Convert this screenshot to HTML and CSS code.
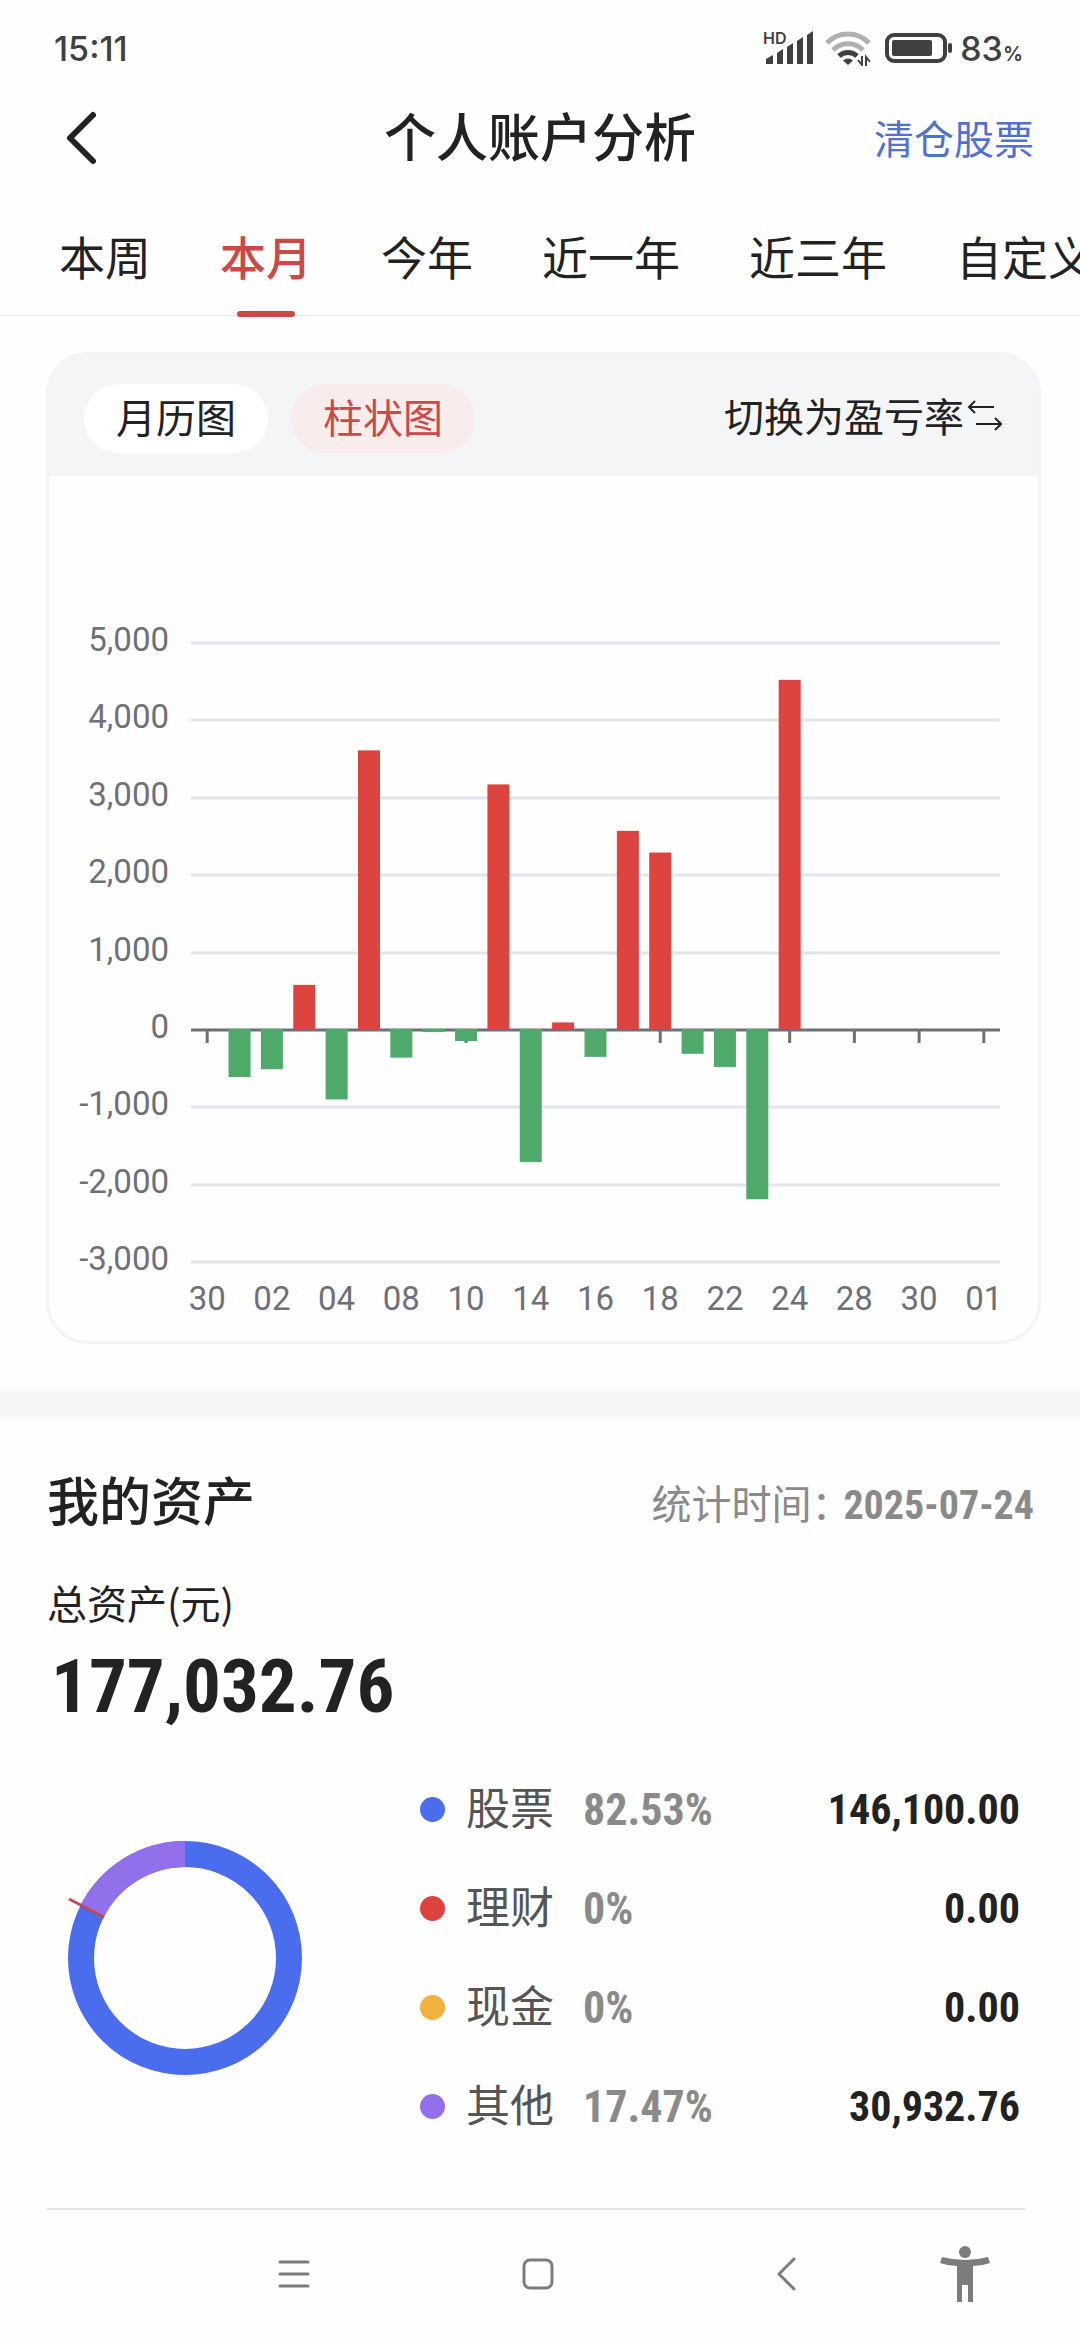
FILE: index.html
```html
<!DOCTYPE html>
<html lang="zh-CN">
<head>
    <meta charset="UTF-8">
    <meta name="viewport" content="width=device-width, initial-scale=1.0">
    <title>个人账户分析</title>
    <link rel="stylesheet" href="styles.css">
</head>

<body>

    <div class="status-bar">
        <span class="clock">15:11</span>
        <div class="status-icons">
            <svg class="icon-signal" width="54" height="36" viewBox="0 0 54 36" fill="#404040">
                <text x="2" y="14" font-size="16" font-weight="600">HD</text>
                <path d="M5 34v-5l7-4v9zM16 34V23l6-4v15zM26 34V17l6-4v21zM36 34V11l6-4v27zM46 34V5l6-4v33z"/>
            </svg>
            <svg class="icon-wifi" width="48" height="36" viewBox="0 0 48 36" fill="none" stroke-width="5">
                <path d="M3 13a29 29 0 0 1 42 0" stroke="#b0b0b0"/>
                <path d="M9 20a21 21 0 0 1 30 0" stroke="#b0b0b0"/>
                <path d="M15 26a13 13 0 0 1 18 0" stroke="#404040"/>
                <path d="M24 35l-5-4.500q5-4 10 0z" fill="#404040"/>
                <path d="M38 26v9l-4-5M42 36v-9l4 5" stroke="#404040" stroke-width="2"/>
            </svg>
            <svg class="icon-battery" width="70" height="32" viewBox="0 0 70 32" fill="none">
                <rect x="3" y="3" width="58" height="26" rx="7" stroke="#404040" stroke-width="4"/>
                <rect x="8" y="8" width="40" height="16" rx="2" fill="#404040"/>
                <rect x="64" y="11" width="4" height="10" rx="2" fill="#404040"/>
            </svg>
            <span class="battery-level">83<small>%</small></span>
        </div>
    </div>

    <header class="header">
        <button class="back-button" aria-label="返回">
            <svg width="36" height="56" viewBox="0 0 36 56" fill="none" stroke="#222" stroke-width="6" stroke-linecap="round" stroke-linejoin="round">
                <path d="M31 5L8 28l23 23"/>
            </svg>
        </button>
        <h1>个人账户分析</h1>
        <a class="clear-link" href="#">清仓股票</a>
    </header>

    <nav class="tabs">
        <button>本周</button>
        <button class="active">本月</button>
        <button>今年</button>
        <button>近一年</button>
        <button>近三年</button>
        <button>自定义</button>
    </nav>

    <main>
        <section class="chart-card">
            <div class="chart-header">
                <button class="pill">月历图</button>
                <button class="pill pill-active">柱状图</button>
                <button class="switch-button">切换为盈亏率<svg width="38" height="32" viewBox="0 0 38 32" fill="none" stroke="#222" stroke-width="2">
                        <path d="M30 8H5M11 2L5 8l6 6M12 25h25M31 19l6 6-6 6"/>
                    </svg></button>
            </div>
            <svg class="chart" id="chart" viewBox="0 0 989 865"></svg>
        </section>

        <section class="assets">
            <div class="assets-header">
                <h2>我的资产</h2>
                <p class="stat-time">统计时间：<span class="number">2025-07-24</span></p>
            </div>
            <p class="total-label">总资产(元)</p>
            <p class="total number">177,032.76</p>
            <div class="assets-body">
                <svg class="donut" width="236" height="236" viewBox="0 0 236 236" fill="none">
                    <circle cx="118" cy="118" r="104" stroke="#4a6dee" stroke-width="26"/>
                    <circle cx="118" cy="118" r="104" stroke="#9370eb" stroke-width="26" pathLength="10000" stroke-dasharray="1747 8253" transform="rotate(-152.900 118 118)"/>
                    <path d="M2 59l35 18" stroke="#c04a50" stroke-width="3"/>
                </svg>
                <table class="legend">
                    <tr>
                        <td><span class="dot dot-stock"></span></td>
                        <td class="name">股票</td>
                        <td class="percent number">82.53%</td>
                        <td class="value number">146,100.00</td>
                    </tr>
                    <tr>
                        <td><span class="dot dot-finance"></span></td>
                        <td class="name">理财</td>
                        <td class="percent number">0%</td>
                        <td class="value number">0.00</td>
                    </tr>
                    <tr>
                        <td><span class="dot dot-cash"></span></td>
                        <td class="name">现金</td>
                        <td class="percent number">0%</td>
                        <td class="value number">0.00</td>
                    </tr>
                    <tr>
                        <td><span class="dot dot-other"></span></td>
                        <td class="name">其他</td>
                        <td class="percent number">17.47%</td>
                        <td class="value number">30,932.76</td>
                    </tr>
                </table>
            </div>
        </section>
    </main>

    <footer class="nav-bar">
        <button aria-label="菜单">
            <svg width="32" height="32" viewBox="0 0 32 32" stroke="#7c7c7c" stroke-width="3" stroke-linecap="round">
                <path d="M2 4h28M2 16h28M2 28h28"/>
            </svg>
        </button>
        <button aria-label="主页">
            <svg width="32" height="32" viewBox="0 0 32 32" fill="none" stroke="#7c7c7c" stroke-width="3">
                <rect x="2" y="2" width="28" height="28" rx="6"/>
            </svg>
        </button>
        <button aria-label="返回">
            <svg width="20" height="34" viewBox="0 0 20 34" fill="none" stroke="#7c7c7c" stroke-width="3" stroke-linecap="round" stroke-linejoin="round">
                <path d="M18 2L3 17l15 15"/>
            </svg>
        </button>
        <button aria-label="无障碍">
            <svg width="50" height="58" viewBox="0 0 50 58" fill="#7c7c7c">
                <ellipse cx="25" cy="7" rx="6" ry="6"/>
                <path d="M2 12Q25 18 48 12l2 6q-8 3-17 3v36h-5V40h-6v17h-5V21Q8 21 0 18z"/>
            </svg>
        </button>
    </footer>

    <script>
        class BarChart {
            constructor(svg, days, values) {
                this.svg = svg;
                this.days = days;
                this.values = values;
                this.left = 142;
                this.right = 951;
                this.top = 167;
                this.step = 77.4;
                this.zero = this.top + this.step * 5;
                this.slot = (this.right - this.left) / days.length;
            }

            y(value) {
                return this.zero - value / 1000 * this.step;
            }

            renderGrid() {
                let html = "";
                for (let v = 5000; v >= -3000; v -= 1000) {
                    const y = Math.round(this.y(v));
                    if (v !== 0) {
                        html += `<line class="grid" x1="${this.left}" x2="${this.right}" y1="${y}" y2="${y}"/>`;
                    }
                    html += `<text class="label" text-anchor="end" x="120" y="${y + 8}">${v.toLocaleString("en-US")}</text>`;
                }
                return html;
            }

            renderAxis() {
                const y = Math.round(this.zero);
                let html = `<line class="axis" x1="${this.left}" x2="${this.right}" y1="${y}" y2="${y}"/>`;
                for (let i = 0; i < this.days.length; i += 2) {
                    const x = this.left + this.slot * (i + 0.5);
                    html += `<line class="axis" x1="${x}" x2="${x}" y1="${y}" y2="${y + 13}"/>`;
                    html += `<text class="label" text-anchor="middle" x="${x}" y="834">${this.days[i]}</text>`;
                }
                return html;
            }

            renderBars() {
                let html = "";
                const width = 22;
                for (let i = 0; i < this.values.length; i++) {
                    const v = this.values[i];
                    const x = this.left + this.slot * (i + 0.5) - width / 2;
                    const y = Math.min(this.y(v), this.zero) - 1;
                    const height = Math.abs(this.y(v) - this.zero);
                    html += `<rect class="${v > 0 ? "up" : "down"}" x="${x}" y="${y}" width="${width}" height="${height}"/>`;
                }
                return html;
            }

            render() {
                this.svg.innerHTML = this.renderGrid() + this.renderAxis() + this.renderBars();
            }
        }

        const days = [
            "30", "01", "02", "03", "04", "07", "08", "09", "10", "11", "14", "15", "16",
            "17", "18", "21", "22", "23", "24", "25", "28", "29", "30", "31", "01"
        ];
        const values = [
            0, -620, -520, 570, -910, 3600, -370, -40, -155, 3160, -1720, 85, -360,
            2560, 2280, -320, -490, -2200, 4510
        ];

        new BarChart(document.getElementById("chart"), days, values).render();
    </script>

</body>
</html>
```
FILE: styles.css
```css
body {
    font-family: "Noto Sans CJK SC", sans-serif;
    background-color: #fefefe;
    color: #222;
    margin: 0;
    overflow-x: hidden;
}

h1,
h2,
p {
    margin: 0;
}

button {
    font: inherit;
    color: inherit;
    background: none;
    border: none;
    margin: 0;
    padding: 0;
    cursor: pointer;
}

svg {
    display: block;
}

.number {
    font-family: "Roboto Condensed", "Liberation Sans Narrow", Roboto, sans-serif;
    font-weight: 700;
}

/* status bar */
.status-bar {
    display: flex;
    justify-content: space-between;
    align-items: center;
    height: 96px;
    padding: 0 57px 0 54px;
    font-family: Inter, sans-serif;
    font-size: 34px;
    font-weight: 500;
    color: #404040;
}

.status-icons {
    display: flex;
    align-items: center;
    gap: 6px;
}

.icon-signal {
    margin-right: 3px;
    overflow: visible;
}

.icon-wifi {
    margin-right: 6px;
}

.battery-level small {
    font-size: 20px;
    font-weight: 600;
}

/* header */
.header {
    display: grid;
    grid-template-columns: 1fr auto 1fr;
    align-items: center;
    height: 84px;
    padding: 0 46px;
}

.header h1 {
    padding-bottom: 6px;
    font-size: 52px;
    line-height: 60px;
    font-weight: 500;
}

.back-button {
    justify-self: start;
    margin-left: 16px;
}

.clear-link {
    justify-self: end;
    padding-bottom: 2px;
    font-size: 40px;
    color: #5270d0;
    text-decoration: none;
}

/* tabs */
.tabs {
    display: flex;
    gap: 69px;
    height: 135px;
    padding-left: 59px;
    border-bottom: 1px solid #e9e9e9;
}

.tabs button {
    position: relative;
    flex: none;
    padding-top: 14px;
    font-size: 46px;
    line-height: 60px;
}

.tabs .active {
    color: #cb4947;
    font-weight: 500;
}

.tabs .active::after {
    content: "";
    position: absolute;
    left: 50%;
    bottom: -2px;
    width: 58px;
    height: 6px;
    margin-left: -29px;
    border-radius: 3px;
    background-color: #cb4947;
}

/* chart */
.chart-card {
    margin: 36px 39px 46px 46px;
    border: 3px solid #f6f4f3;
    border-radius: 42px;
    overflow: hidden;
}

.chart-header {
    display: flex;
    align-items: center;
    gap: 23px;
    padding: 29px 36px 23px 35px;
    background-color: #f4f5f7;
    font-size: 40px;
}

.pill {
    padding: 0 32px 4px;
    border-radius: 35px;
    background-color: #fff;
    line-height: 65px;
}

.pill-active {
    background-color: #f9ecec;
    color: #cb4947;
}

.switch-button {
    display: flex;
    align-items: center;
    margin-left: auto;
    padding-bottom: 8px;
    line-height: 60px;
}

.chart {
    width: 100%;
}

.grid {
    stroke: #e2e5ee;
    stroke-width: 3;
}

.axis {
    stroke: #6e7079;
    stroke-width: 3;
}

.label {
    font-family: Roboto, sans-serif;
    font-size: 33px;
    fill: #6e7079;
}

.up {
    fill: #dd433f;
}

.down {
    fill: #4fa96b;
}

/* assets */
.assets {
    padding: 44px 46px 0 47px;
    border-top: 28px solid #f6f6f6;
}

.assets-header {
    display: flex;
    justify-content: space-between;
    align-items: center;
}

.assets-header h2 {
    font-size: 52px;
    line-height: 70px;
    font-weight: 500;
}

.stat-time {
    padding-top: 10px;
    font-size: 40px;
    line-height: 60px;
    color: #8a8a8a;
}

.stat-time .number {
    margin-left: -8px;
}

.total-label {
    margin-top: 36px;
    font-size: 40px;
    line-height: 60px;
}

.total {
    padding-left: 4px;
    font-size: 75px;
    line-height: 108px;
}

.assets-body {
    display: flex;
    justify-content: space-between;
    align-items: center;
    margin-right: 9px;
    padding: 20px 5px 52px 20px;
    border-bottom: 2px solid #e6e6e6;
}

.legend {
    width: 600px;
    border-collapse: collapse;
    table-layout: fixed;
}

.legend td {
    height: 99px;
    padding: 0;
}

.legend td:first-child {
    width: 46px;
}

.legend .name {
    width: 117px;
    height: 91px;
    padding-bottom: 8px;
    font-size: 44px;
    line-height: 60px;
    color: #555;
}

.legend .percent {
    font-size: 44px;
    color: #8a8a8a;
}

.legend .value {
    font-size: 42px;
    text-align: right;
}

.dot {
    display: block;
    width: 25px;
    height: 25px;
    border-radius: 50%;
}

.dot-stock {
    background-color: #4a6dee;
}

.dot-finance {
    background-color: #db433f;
}

.dot-cash {
    background-color: #f0b13e;
}

.dot-other {
    background-color: #9370eb;
}

/* system navigation */
.nav-bar {
    display: grid;
    grid-template-columns: 240fr 248fr 246fr 113fr;
    align-items: center;
    justify-items: center;
    height: 128px;
    padding: 0 58px 0 174px;
}
```
